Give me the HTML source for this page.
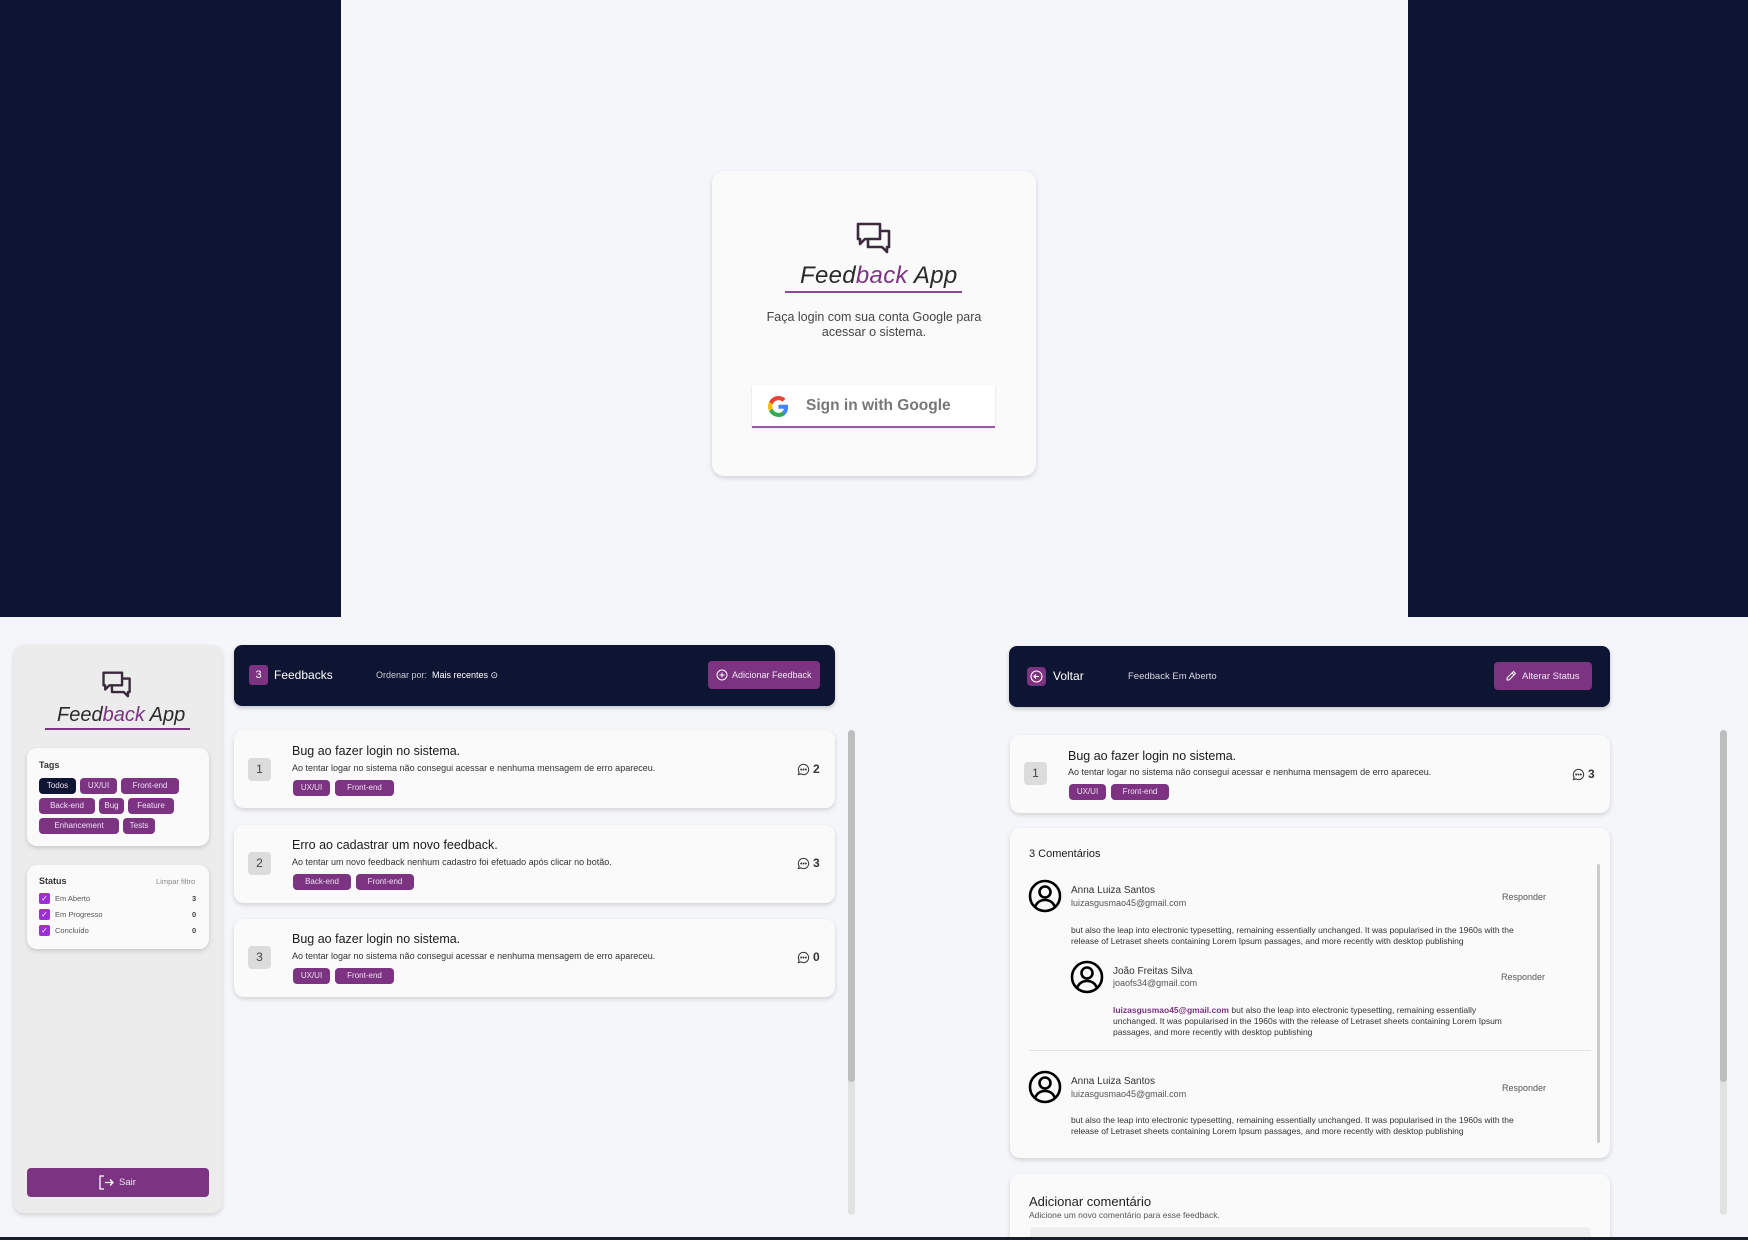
<!DOCTYPE html>
<html><head><meta charset="utf-8"><style>
*{margin:0;padding:0;box-sizing:border-box}
html{width:1748px;height:1240px;overflow:hidden}
body{width:1748px;height:1240px;position:relative;overflow:hidden;background:#f5f6fa;font-family:"Liberation Sans",sans-serif;color:#1a1a1a}
.a{position:absolute}
.navy{background:#0e1532}
.card{position:absolute;background:#fafafa;border-radius:10px;box-shadow:0 2px 5px rgba(0,0,0,.15)}
.tag{position:absolute;background:#7b3382;color:#f0e0f2;font-size:8px;border-radius:4px;height:16px;line-height:16px;text-align:center}
.pur{background:#7b3382}
.t{position:absolute;white-space:nowrap}
.num{position:absolute;background:#dcdcdc;border-radius:4px;width:23px;height:23px;text-align:center;line-height:23px;font-size:12px;color:#444}
.cb{position:absolute;width:11px;height:11px;background:#9b30d9;border-radius:2px;color:#fff;font-size:8px;line-height:11px;text-align:center}
.cnt{position:absolute;font-size:12px;font-weight:bold;color:#333;white-space:nowrap}
.cnt svg{vertical-align:-3px;margin-right:3px}
</style></head><body>
<div class="a navy" style="left:0;top:0;width:1748px;height:617px"></div>
<div class="a" style="left:341px;top:0;width:1067px;height:617px;background:#f5f6fa"></div>

<div class="card" style="left:712px;top:171px;width:324px;height:305px;border-radius:12px"></div>
<svg class="a" style="left:855px;top:222px" width="38" height="38" viewBox="0 0 38 38" fill="none" stroke="#3a2a3c" stroke-width="2.6" stroke-linejoin="round"><path d="M3 2h22v15H10l-5 5v-5H3z"/><path d="M25 9h9v16h-2v5l-5-5H13v-8"/></svg>
<div class="t" style="left:800px;top:262px;font-size:24px;font-style:italic;color:#2a2a2a;letter-spacing:.3px">Feed<span style="color:#7b3382">back</span> App</div>
<div class="a" style="left:785px;top:291px;width:177px;height:2px;background:#8e4a9a"></div>
<div class="t" style="left:712px;width:324px;text-align:center;top:310px;font-size:12.5px;line-height:15px;color:#444;white-space:normal">Faça login com sua conta Google para<br>acessar o sistema.</div>
<div class="a" style="left:752px;top:385px;width:243px;height:42px;background:#fff;box-shadow:0 1px 2px rgba(0,0,0,.15)"></div>
<div class="a" style="left:752px;top:426px;width:243px;height:2px;background:#9a5aa6"></div>
<svg class="a" style="left:768px;top:396px" width="21" height="21" viewBox="0 0 48 48"><path fill="#EA4335" d="M24 9.5c3.5 0 6.6 1.2 9.1 3.6l6.8-6.8C35.8 2.4 30.3 0 24 0 14.6 0 6.6 5.4 2.6 13.3l7.9 6.2C12.4 13.7 17.7 9.5 24 9.5z"/><path fill="#4285F4" d="M46.1 24.5c0-1.6-.1-3.1-.4-4.5H24v9h12.4c-.5 2.9-2.2 5.4-4.7 7.1l7.6 5.9c4.4-4.1 6.8-10.1 6.8-17.5z"/><path fill="#FBBC05" d="M10.5 28.7c-.5-1.4-.8-3-.8-4.7s.3-3.2.8-4.7l-7.9-6.2C.9 16.5 0 20.1 0 24s.9 7.5 2.6 10.7l7.9-6z"/><path fill="#34A853" d="M24 48c6.5 0 11.9-2.1 15.9-5.8l-7.6-5.9c-2.1 1.4-4.9 2.3-8.3 2.3-6.3 0-11.6-4.2-13.5-10l-7.9 6.1C6.6 42.6 14.6 48 24 48z"/></svg>
<div class="t" style="left:806px;top:397px;font-size:15.5px;font-weight:bold;color:#777">Sign in with Google</div>

<div class="a" style="left:14px;top:645px;width:208px;height:568px;background:#ececec;border-radius:10px;box-shadow:0 2px 5px rgba(0,0,0,.15)"></div>
<svg class="a" style="left:101px;top:671px" width="32" height="32" viewBox="0 0 38 38" fill="none" stroke="#3a2a3c" stroke-width="2.8" stroke-linejoin="round"><path d="M3 2h22v15H10l-5 5v-5H3z"/><path d="M25 9h9v16h-2v5l-5-5H13v-8"/></svg>
<div class="t" style="left:57px;top:704px;font-size:20px;font-style:italic;color:#2a2a2a">Feed<span style="color:#7b3382">back</span> App</div>
<div class="a" style="left:45px;top:728px;width:145px;height:2px;background:#7b3382"></div>

<div class="card" style="left:27px;top:748px;width:182px;height:98px"></div>
<div class="t" style="left:39px;top:760px;font-size:9px;font-weight:bold;color:#333">Tags</div>
<div class="tag" style="left:39px;top:778px;width:37px;background:#0e1532">Todos</div>
<div class="tag" style="left:80px;top:778px;width:37px">UX/UI</div>
<div class="tag" style="left:121px;top:778px;width:58px">Front-end</div>
<div class="tag" style="left:39px;top:798px;width:56px">Back-end</div>
<div class="tag" style="left:99px;top:798px;width:25px">Bug</div>
<div class="tag" style="left:128px;top:798px;width:46px">Feature</div>
<div class="tag" style="left:39px;top:818px;width:80px">Enhancement</div>
<div class="tag" style="left:123px;top:818px;width:32px">Tests</div>

<div class="card" style="left:27px;top:865px;width:182px;height:84px"></div>
<div class="t" style="left:39px;top:876px;font-size:9px;font-weight:bold;color:#333">Status</div>
<div class="t" style="left:156px;top:877px;font-size:7.5px;color:#888">Limpar filtro</div>
<div class="cb" style="left:39px;top:893px">✓</div><div class="t" style="left:55px;top:894px;font-size:7.5px;color:#555">Em Aberto</div><div class="t" style="left:192px;top:894px;font-size:7.5px;font-weight:bold;color:#444">3</div>
<div class="cb" style="left:39px;top:909px">✓</div><div class="t" style="left:55px;top:910px;font-size:7.5px;color:#555">Em Progresso</div><div class="t" style="left:192px;top:910px;font-size:7.5px;font-weight:bold;color:#444">0</div>
<div class="cb" style="left:39px;top:925px">✓</div><div class="t" style="left:55px;top:926px;font-size:7.5px;color:#555">Concluído</div><div class="t" style="left:192px;top:926px;font-size:7.5px;font-weight:bold;color:#444">0</div>

<div class="a pur" style="left:27px;top:1168px;width:182px;height:29px;border-radius:4px"></div>
<svg class="a" style="left:99px;top:1175px" width="15" height="15" viewBox="0 0 15 15" fill="none" stroke="#fff" stroke-width="1.3"><path d="M5 1H1v13h4M6 7.5h8M11 4.5l3 3-3 3"/></svg>
<div class="t" style="left:119px;top:1177px;font-size:9.5px;color:#f2e6f4">Sair</div>

<div class="a navy" style="left:234px;top:645px;width:601px;height:61px;border-radius:8px;box-shadow:0 2px 4px rgba(0,0,0,.2)"></div>
<div class="a pur" style="left:249px;top:665px;width:19px;height:20px;border-radius:3px;color:#fff;font-size:11px;text-align:center;line-height:20px">3</div>
<div class="t" style="left:274px;top:668px;font-size:12px;color:#fff">Feedbacks</div>
<div class="t" style="left:376px;top:670px;font-size:9px;color:#c9cbd6">Ordenar por: &nbsp;<span style="color:#fff">Mais recentes ⊙</span></div>
<div class="a pur" style="left:708px;top:661px;width:112px;height:28px;border-radius:4px"></div>
<svg class="a" style="left:716px;top:669px" width="12" height="12" viewBox="0 0 12 12" fill="none" stroke="#fff" stroke-width="1"><circle cx="6" cy="6" r="5"/><path d="M6 3.5v5M3.5 6h5"/></svg>
<div class="t" style="left:732px;top:670px;font-size:9px;color:#f2e6f4">Adicionar Feedback</div>

<div class="card" style="left:234px;top:730px;width:601px;height:78px"></div>
<div class="num" style="left:248px;top:758px">1</div>
<div class="t" style="left:292px;top:744px;font-size:12.5px;color:#1a1a1a">Bug ao fazer login no sistema.</div>
<div class="t" style="left:292px;top:763px;font-size:9px;color:#333">Ao tentar logar no sistema não consegui acessar e nenhuma mensagem de erro apareceu.</div>
<div class="tag" style="left:293px;top:780px;width:37px">UX/UI</div><div class="tag" style="left:335px;top:780px;width:59px">Front-end</div>
<div class="cnt" style="left:797px;top:762px"><svg width="13" height="13" viewBox="0 0 14 14" fill="none" stroke="#333" stroke-width="1.1"><path d="M7 1.5a5.5 5.5 0 1 1-2.8 10.2L1.5 12.5l.8-2.6A5.5 5.5 0 0 1 7 1.5z"/><circle cx="4.5" cy="7" r=".5" fill="#333"/><circle cx="7" cy="7" r=".5" fill="#333"/><circle cx="9.5" cy="7" r=".5" fill="#333"/></svg>2</div>

<div class="card" style="left:234px;top:825px;width:601px;height:78px"></div>
<div class="num" style="left:248px;top:852px">2</div>
<div class="t" style="left:292px;top:838px;font-size:12.5px">Erro ao cadastrar um novo feedback.</div>
<div class="t" style="left:292px;top:857px;font-size:9px;color:#333">Ao tentar um novo feedback nenhum cadastro foi efetuado após clicar no botão.</div>
<div class="tag" style="left:293px;top:874px;width:58px">Back-end</div><div class="tag" style="left:356px;top:874px;width:58px">Front-end</div>
<div class="cnt" style="left:797px;top:856px"><svg width="13" height="13" viewBox="0 0 14 14" fill="none" stroke="#333" stroke-width="1.1"><path d="M7 1.5a5.5 5.5 0 1 1-2.8 10.2L1.5 12.5l.8-2.6A5.5 5.5 0 0 1 7 1.5z"/><circle cx="4.5" cy="7" r=".5" fill="#333"/><circle cx="7" cy="7" r=".5" fill="#333"/><circle cx="9.5" cy="7" r=".5" fill="#333"/></svg>3</div>

<div class="card" style="left:234px;top:919px;width:601px;height:78px"></div>
<div class="num" style="left:248px;top:946px">3</div>
<div class="t" style="left:292px;top:932px;font-size:12.5px">Bug ao fazer login no sistema.</div>
<div class="t" style="left:292px;top:951px;font-size:9px;color:#333">Ao tentar logar no sistema não consegui acessar e nenhuma mensagem de erro apareceu.</div>
<div class="tag" style="left:293px;top:968px;width:37px">UX/UI</div><div class="tag" style="left:335px;top:968px;width:59px">Front-end</div>
<div class="cnt" style="left:797px;top:950px"><svg width="13" height="13" viewBox="0 0 14 14" fill="none" stroke="#333" stroke-width="1.1"><path d="M7 1.5a5.5 5.5 0 1 1-2.8 10.2L1.5 12.5l.8-2.6A5.5 5.5 0 0 1 7 1.5z"/><circle cx="4.5" cy="7" r=".5" fill="#333"/><circle cx="7" cy="7" r=".5" fill="#333"/><circle cx="9.5" cy="7" r=".5" fill="#333"/></svg>0</div>

<div class="a" style="left:848px;top:730px;width:7px;height:485px;background:#e2e2e2;border-radius:4px"></div>
<div class="a" style="left:848px;top:730px;width:7px;height:352px;background:#bdbdbd;border-radius:4px"></div>

<div class="a navy" style="left:1009px;top:646px;width:601px;height:61px;border-radius:8px;box-shadow:0 2px 4px rgba(0,0,0,.2)"></div>
<div class="a pur" style="left:1027px;top:667px;width:19px;height:19px;border-radius:4px"></div>
<svg class="a" style="left:1030px;top:670px" width="13" height="13" viewBox="0 0 13 13" fill="none" stroke="#fff" stroke-width="1.1"><circle cx="6.5" cy="6.5" r="5.5"/><path d="M9 6.5H4M6 4.5l-2 2 2 2"/></svg>
<div class="t" style="left:1053px;top:669px;font-size:12px;color:#fff">Voltar</div>
<div class="t" style="left:1128px;top:671px;font-size:9.5px;color:#d6d8e2">Feedback Em Aberto</div>
<div class="a pur" style="left:1494px;top:662px;width:98px;height:28px;border-radius:4px"></div>
<svg class="a" style="left:1505px;top:670px" width="12" height="12" viewBox="0 0 12 12" fill="none" stroke="#fff" stroke-width="1"><path d="M8.5 1.5l2 2-6.5 6.5H2V8z M7 3l2 2"/></svg>
<div class="t" style="left:1522px;top:671px;font-size:9.5px;color:#f2e6f4">Alterar Status</div>

<div class="card" style="left:1010px;top:735px;width:600px;height:78px"></div>
<div class="num" style="left:1024px;top:762px">1</div>
<div class="t" style="left:1068px;top:749px;font-size:12.5px">Bug ao fazer login no sistema.</div>
<div class="t" style="left:1068px;top:767px;font-size:9px;color:#333">Ao tentar logar no sistema não consegui acessar e nenhuma mensagem de erro apareceu.</div>
<div class="tag" style="left:1069px;top:784px;width:37px">UX/UI</div><div class="tag" style="left:1111px;top:784px;width:58px">Front-end</div>
<div class="cnt" style="left:1572px;top:767px"><svg width="13" height="13" viewBox="0 0 14 14" fill="none" stroke="#333" stroke-width="1.1"><path d="M7 1.5a5.5 5.5 0 1 1-2.8 10.2L1.5 12.5l.8-2.6A5.5 5.5 0 0 1 7 1.5z"/><circle cx="4.5" cy="7" r=".5" fill="#333"/><circle cx="7" cy="7" r=".5" fill="#333"/><circle cx="9.5" cy="7" r=".5" fill="#333"/></svg>3</div>

<div class="card" style="left:1010px;top:828px;width:600px;height:330px"></div>
<div class="t" style="left:1029px;top:848px;font-size:11px">3 Comentários</div>
<div class="a" style="left:1597px;top:864px;width:3px;height:279px;background:#ccc;border-radius:2px"></div>

<svg class="a" style="left:1028px;top:879px" width="34" height="34" viewBox="0 0 34 34" fill="none" stroke="#000" stroke-width="2.6"><circle cx="17" cy="17" r="15"/><circle cx="17" cy="13" r="5.5"/><path d="M7 28c2-5 6-7 10-7s8 2 10 7"/></svg>
<div class="t" style="left:1071px;top:885px;font-size:10px;color:#333">Anna Luiza Santos</div>
<div class="t" style="left:1071px;top:898px;font-size:9px;color:#555">luizasgusmao45@gmail.com</div>
<div class="t" style="left:1502px;top:892px;font-size:9px;color:#555">Responder</div>
<div class="t" style="left:1071px;top:925px;font-size:8.5px;line-height:11px;color:#333">but also the leap into electronic typesetting, remaining essentially unchanged. It was popularised in the 1960s with the<br>release of Letraset sheets containing Lorem Ipsum passages, and more recently with desktop publishing</div>

<svg class="a" style="left:1070px;top:960px" width="34" height="34" viewBox="0 0 34 34" fill="none" stroke="#000" stroke-width="2.6"><circle cx="17" cy="17" r="15"/><circle cx="17" cy="13" r="5.5"/><path d="M7 28c2-5 6-7 10-7s8 2 10 7"/></svg>
<div class="t" style="left:1113px;top:966px;font-size:10px;color:#333">João Freitas Silva</div>
<div class="t" style="left:1113px;top:978px;font-size:9px;color:#555">joaofs34@gmail.com</div>
<div class="t" style="left:1501px;top:972px;font-size:9px;color:#555">Responder</div>
<div class="t" style="left:1113px;top:1005px;font-size:8.5px;line-height:11px;color:#333"><b style="color:#7b3382">luizasgusmao45@gmail.com</b> but also the leap into electronic typesetting, remaining essentially<br>unchanged. It was popularised in the 1960s with the release of Letraset sheets containing Lorem Ipsum<br>passages, and more recently with desktop publishing</div>

<div class="a" style="left:1029px;top:1050px;width:562px;height:1px;background:#e2e2e2"></div>

<svg class="a" style="left:1028px;top:1070px" width="34" height="34" viewBox="0 0 34 34" fill="none" stroke="#000" stroke-width="2.6"><circle cx="17" cy="17" r="15"/><circle cx="17" cy="13" r="5.5"/><path d="M7 28c2-5 6-7 10-7s8 2 10 7"/></svg>
<div class="t" style="left:1071px;top:1076px;font-size:10px;color:#333">Anna Luiza Santos</div>
<div class="t" style="left:1071px;top:1089px;font-size:9px;color:#555">luizasgusmao45@gmail.com</div>
<div class="t" style="left:1502px;top:1083px;font-size:9px;color:#555">Responder</div>
<div class="t" style="left:1071px;top:1115px;font-size:8.5px;line-height:11px;color:#333">but also the leap into electronic typesetting, remaining essentially unchanged. It was popularised in the 1960s with the<br>release of Letraset sheets containing Lorem Ipsum passages, and more recently with desktop publishing</div>

<div class="card" style="left:1010px;top:1174px;width:600px;height:66px;border-radius:10px 10px 0 0"></div>
<div class="t" style="left:1029px;top:1194px;font-size:13px;color:#222">Adicionar comentário</div>
<div class="t" style="left:1029px;top:1210px;font-size:8.5px;color:#555">Adicione um novo comentário para esse feedback.</div>
<div class="a" style="left:1030px;top:1227px;width:561px;height:13px;background:#efefef;border-radius:4px 4px 0 0"></div>

<div class="a" style="left:1720px;top:730px;width:7px;height:485px;background:#e2e2e2;border-radius:4px"></div>
<div class="a" style="left:1720px;top:730px;width:7px;height:352px;background:#bdbdbd;border-radius:4px"></div>

<div class="a" style="left:0;top:1237px;width:1748px;height:3px;background:#1a1d2a"></div>
</body></html>
